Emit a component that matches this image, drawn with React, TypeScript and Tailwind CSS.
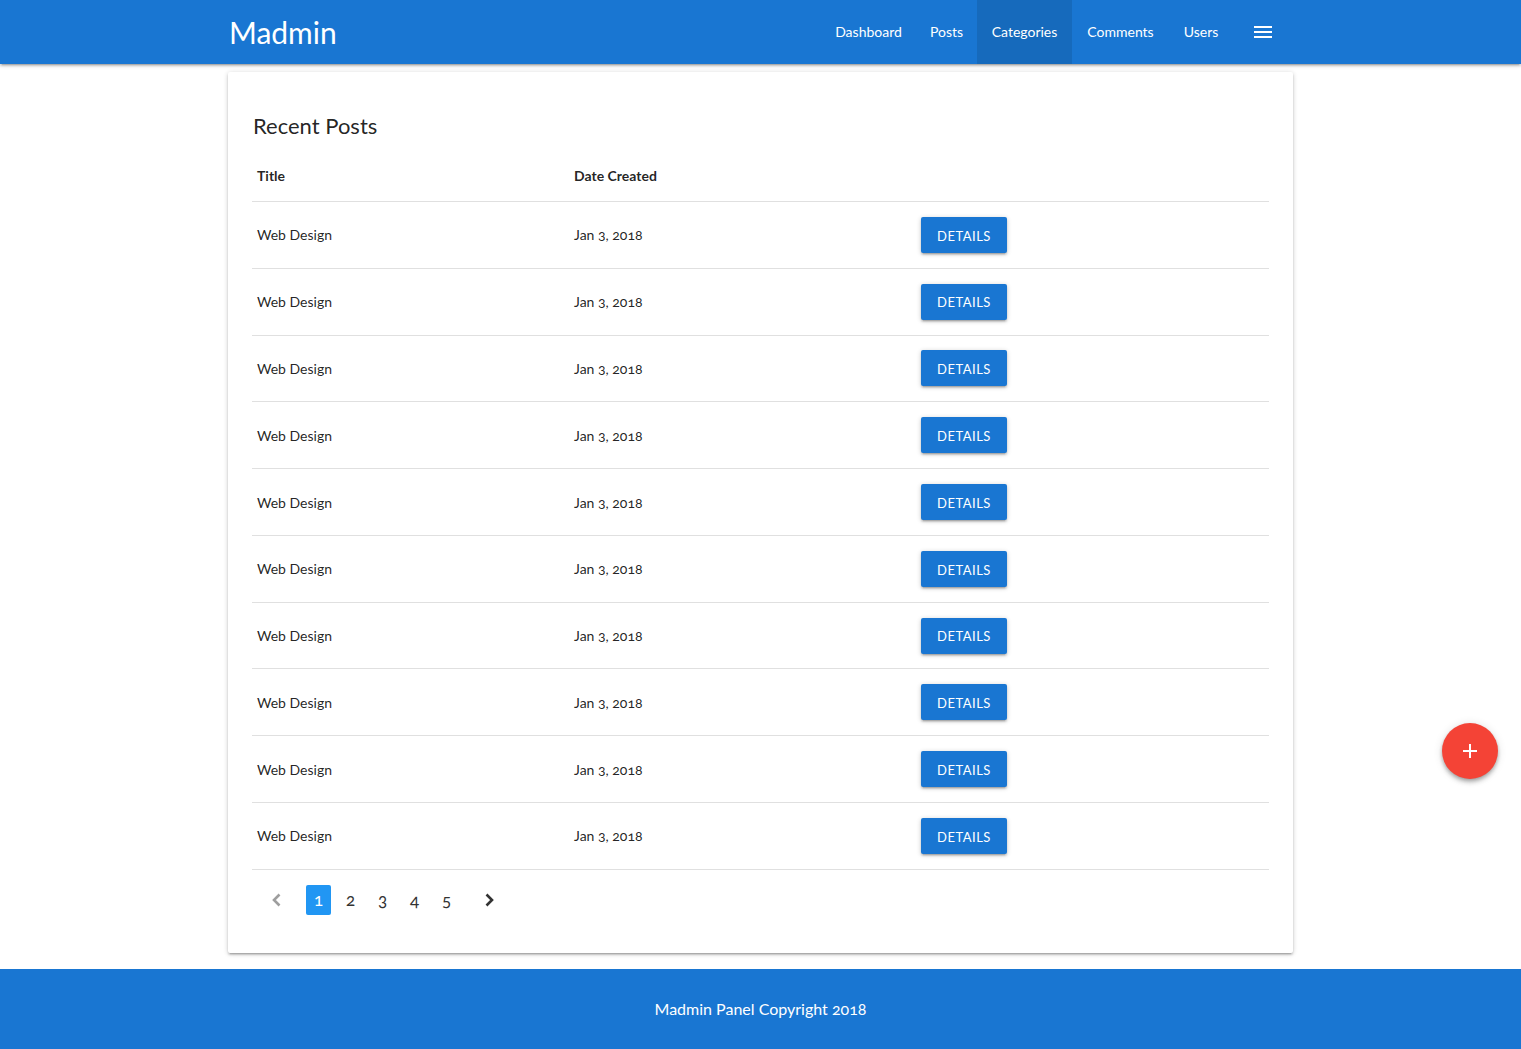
import { useState } from "react";

const posts = Array.from({ length: 10 }, () => ({
  title: "Web Design",
  date: "Jan 3, 2018",
}));

const navLinks = [
  { label: "Dashboard", w: "w-[95px]" },
  { label: "Posts", w: "w-[61px]" },
  { label: "Categories", w: "w-[95px]", active: true },
  { label: "Comments", w: "w-[97px]" },
  { label: "Users", w: "w-[64px]" },
];

export default function App() {
  const [page, setPage] = useState(1);

  return (
    <div className="min-h-[1049px] bg-white font-['Lato','Open_Sans',sans-serif] [font-variant-numeric:oldstyle-nums] text-[rgba(0,0,0,0.87)] flex flex-col">
      <nav className="h-[64px] bg-[#1976d2] shadow-[0_2px_2px_0_rgba(0,0,0,0.14),0_3px_1px_-2px_rgba(0,0,0,0.12),0_1px_5px_0_rgba(0,0,0,0.2)] relative z-10">
        <div className="w-[1065px] mx-auto h-full flex items-center justify-between">
          <a href="#" className="text-white text-[30px] leading-[64px] pl-[1px] -mt-[1px]">
            Madmin
          </a>
          <ul className="flex h-full items-center">
            {navLinks.map((l) => (
              <li
                key={l.label}
                className={
                  "h-full flex items-center justify-center text-white text-[14px] pb-[2px] " +
                  l.w +
                  (l.active ? " bg-[rgba(0,0,0,0.1)]" : "")
                }
              >
                {l.label}
              </li>
            ))}
            <li className="h-full flex items-center pl-[21px] pr-[21px]">
              <svg width="18" height="14" viewBox="0 0 18 14" fill="white">
                <rect x="0" y="1" width="18" height="2" />
                <rect x="0" y="6" width="18" height="2" />
                <rect x="0" y="11" width="18" height="2" />
              </svg>
            </li>
          </ul>
        </div>
      </nav>

      <main className="flex-1">
        <div className="w-[1065px] mx-auto mt-[8px] mb-[16px] bg-white rounded-[2px] shadow-[0_2px_2px_0_rgba(0,0,0,0.14),0_3px_1px_-2px_rgba(0,0,0,0.12),0_1px_5px_0_rgba(0,0,0,0.2)]">
          <div className="p-[24px]">
            <h2 className="text-[22px] leading-[32px] pt-[14px] mb-[8px] pl-[1px]">Recent Posts</h2>
            <table className="w-full table-fixed border-collapse text-[14px]">
              <colgroup>
                <col className="w-[317px]" />
                <col className="w-[347px]" />
                <col />
              </colgroup>
              <thead>
                <tr className="border-b border-[rgba(0,0,0,0.12)]">
                  <th className="text-left font-bold px-[5px] pt-[16px] pb-[15px] leading-[20px]">Title</th>
                  <th className="text-left font-bold px-[5px] pt-[16px] pb-[15px] leading-[20px]">Date Created</th>
                  <th></th>
                </tr>
              </thead>
              <tbody>
                {posts.map((p, i) => (
                  <tr key={i} className="border-b border-[rgba(0,0,0,0.12)]">
                    <td className="px-[5px] py-[14.9px]">{p.title}</td>
                    <td className="px-[5px] py-[14.9px]">{p.date}</td>
                    <td className="px-[5px] py-[14.9px]">
                      <button className="h-[36px] w-[86px] pt-[3px] bg-[#1976d2] text-white text-[13px] tracking-[0.5px] uppercase rounded-[2px] shadow-[0_2px_2px_0_rgba(0,0,0,0.14),0_3px_1px_-2px_rgba(0,0,0,0.12),0_1px_5px_0_rgba(0,0,0,0.2)]">
                        Details
                      </button>
                    </td>
                  </tr>
                ))}
              </tbody>
            </table>

            <ul className="flex items-center mt-[15px] mb-[14px] ml-[13px] h-[30px]">
              <li className="w-[24px] h-[24px]">
                <svg width="24" height="24" viewBox="0 0 24 24" fill="none" stroke="#9e9e9e" strokeWidth="2.6">
                  <path d="M14.5 6.5L9 12l5.5 5.5" />
                </svg>
              </li>
              <li className="ml-[17px] flex gap-[7px]">
                {[1, 2, 3, 4, 5].map((n) => (
                  <button
                    key={n}
                    onClick={() => setPage(n)}
                    className={
                      "w-[25px] h-[30px] rounded-[2px] text-[17px] leading-[30px] text-center " +
                      (n === page ? "bg-[#2196f3] text-white" : "text-[#333]")
                    }
                  >
                    {n}
                  </button>
                ))}
              </li>
              <li className="ml-[18px] w-[24px] h-[24px]">
                <svg width="24" height="24" viewBox="0 0 24 24" fill="none" stroke="#333333" strokeWidth="2.6">
                  <path d="M9.5 6.5L15 12l-5.5 5.5" />
                </svg>
              </li>
            </ul>
          </div>
        </div>
      </main>

      <footer className="h-[80px] bg-[#1976d2] flex items-center justify-center text-white text-[16px]">
        Madmin Panel Copyright 2018
      </footer>

      <button className="fixed left-[1442px] top-[723px] w-[56px] h-[56px] rounded-full bg-[#f44336] flex items-center justify-center shadow-[0_4px_5px_0_rgba(0,0,0,0.14),0_1px_10px_0_rgba(0,0,0,0.12),0_2px_4px_-1px_rgba(0,0,0,0.3)]">
        <svg width="16" height="16" viewBox="0 0 16 16" fill="white">
          <rect x="7" y="1" width="2" height="14" />
          <rect x="1" y="7" width="14" height="2" />
        </svg>
      </button>
    </div>
  );
}
